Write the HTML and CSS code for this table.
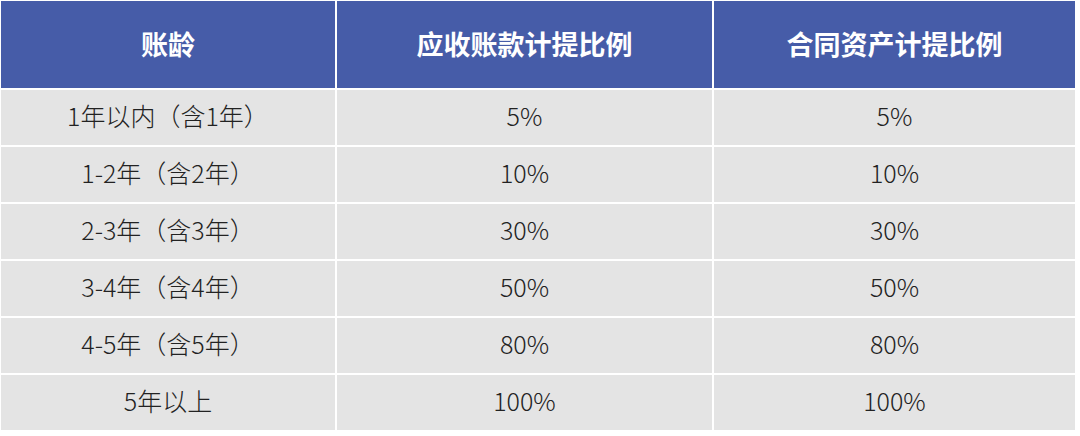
FILE: index.html
```html
<!DOCTYPE html>
<html lang="zh-CN">
<head>
<meta charset="utf-8">
<link rel="stylesheet" href="styles.css">
</head>
<body>
<div class="table">
  <div class="cell head">账龄</div>
  <div class="cell head">应收账款计提比例</div>
  <div class="cell head">合同资产计提比例</div>

  <div class="cell">1年以内（含1年）</div>
  <div class="cell">5%</div>
  <div class="cell">5%</div>

  <div class="cell">1-2年（含2年）</div>
  <div class="cell">10%</div>
  <div class="cell">10%</div>

  <div class="cell">2-3年（含3年）</div>
  <div class="cell">30%</div>
  <div class="cell">30%</div>

  <div class="cell">3-4年（含4年）</div>
  <div class="cell">50%</div>
  <div class="cell">50%</div>

  <div class="cell">4-5年（含5年）</div>
  <div class="cell">80%</div>
  <div class="cell">80%</div>

  <div class="cell">5年以上</div>
  <div class="cell">100%</div>
  <div class="cell">100%</div>
</div>
</body>
</html>
```

FILE: styles.css
```css
html, body {
  margin: 0;
  padding: 0;
  background: #ffffff;
}
body {
  padding: 1px 5px 0 1px;
  font-family: "Noto Sans CJK SC", "Noto Sans", sans-serif;
}
.table {
  display: grid;
  grid-template-columns: 334px 375px 1fr;
  grid-template-rows: 87px repeat(6, 55px);
  gap: 2px;
  background: #ffffff;
}
.cell {
  display: flex;
  align-items: center;
  justify-content: center;
  padding-bottom: 5px;
  background: #e4e4e4;
  color: #222222;
  font-size: 25px;
  font-weight: 300;
}
.cell.head {
  background: #465ca8;
  color: #ffffff;
  font-weight: 700;
  font-size: 27px;
  padding-bottom: 2px;
}
```
